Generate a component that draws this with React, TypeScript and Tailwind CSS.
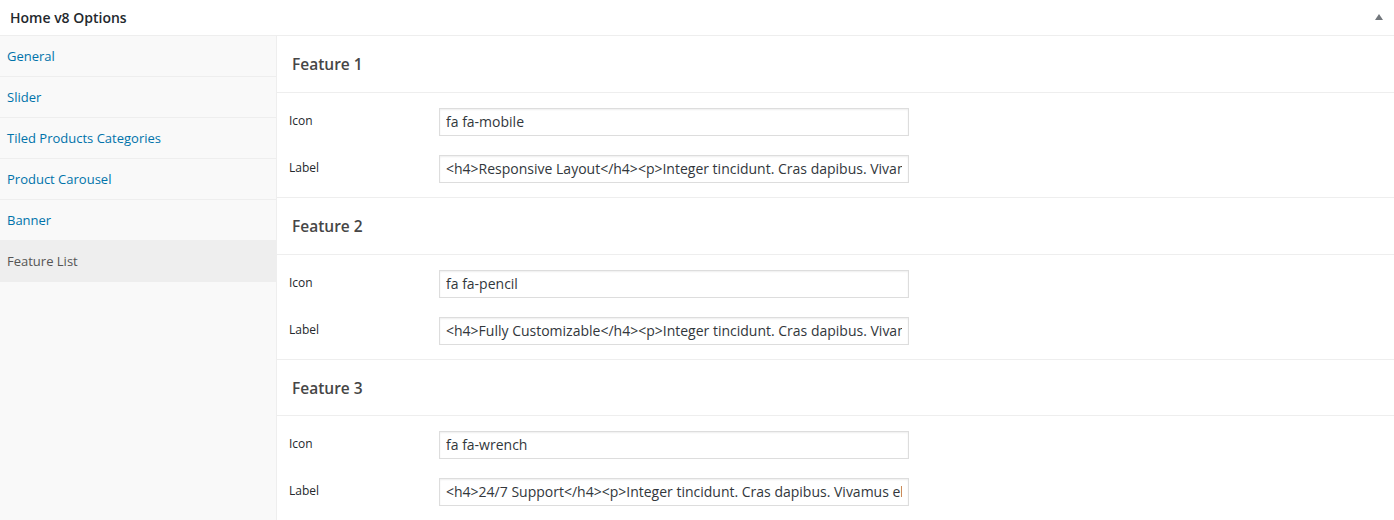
import React from "react";

const nav = ["General", "Slider", "Tiled Products Categories", "Product Carousel", "Banner", "Feature List"];

const features = [
  { title: "Feature 1", icon: "fa fa-mobile", label: "<h4>Responsive Layout</h4><p>Integer tincidunt. Cras dapibus. Vivamus elementum semper nisi.</p>", h: "h-[57px]" },
  { title: "Feature 2", icon: "fa fa-pencil", label: "<h4>Fully Customizable</h4><p>Integer tincidunt. Cras dapibus. Vivamus elementum semper nisi.</p>", h: "h-[57px]" },
  { title: "Feature 3", icon: "fa fa-wrench", label: "<h4>24/7 Support</h4><p>Integer tincidunt. Cras dapibus. Vivamus elementum semper nisi.</p>", h: "h-[56px]" },
];

function Field({ label, value }: { label: string; value: string }) {
  return (
    <div className="flex items-center h-[28px]">
      <div className="w-[162px] pl-[12px] text-[12px] text-[#23282d] -mt-[3px]">{label}</div>
      <input
        readOnly
        value={value}
        className="w-[470px] h-[28px] border border-[#ddd] bg-white px-[6px] pb-[2px] text-[14px] text-[#32373c] shadow-[inset_0_1px_2px_rgba(0,0,0,0.07)] outline-none"
        style={{ fontFamily: "'Open Sans', sans-serif" }}
      />
    </div>
  );
}

export default function App() {
  return (
    <div className="w-[1394px] h-[520px] bg-white overflow-hidden" style={{ fontFamily: "'Open Sans', sans-serif" }}>
      <div className="h-[36px] border-b border-[#eee] flex items-center justify-between pl-[10px] pr-[10px]">
        <div className="text-[14px] font-semibold text-[#23282d]">Home v8 Options</div>
        <svg width="8" height="6" viewBox="0 0 8 6" className="mr-[1px] -mt-[1px]">
          <polygon points="4,0 8,6 0,6" fill="#72777c" />
        </svg>
      </div>
      <div className="flex">
        <div className="w-[277px] shrink-0 bg-[#f9f9f9] border-r border-[#eee] h-[484px]">
          {nav.map((n) => (
            <div
              key={n}
              className={
                n === "Feature List"
                  ? "h-[41px] flex items-center pl-[7px] pt-[2px] text-[13px] text-[#555] bg-[#eee] border-b border-[#eee]"
                  : "h-[41px] flex items-center pl-[7px] pt-[2px] text-[13px] text-[#0073aa] border-b border-[#eee]"
              }
            >
              <span>{n}</span>
            </div>
          ))}
        </div>
        <div className="flex-1">
          {features.map((f) => (
            <div key={f.title}>
              <div className={f.h + " border-b border-[#eee] flex items-center pl-[15px] pt-[2px]"}>
                <span className="text-[15.5px] font-semibold text-[#464646]">{f.title}</span>
              </div>
              <div className="pt-[15px] pb-[14px] flex flex-col gap-[19px] border-b border-[#eee]">
                <Field label="Icon" value={f.icon} />
                <Field label="Label" value={f.label} />
              </div>
            </div>
          ))}
        </div>
      </div>
    </div>
  );
}
